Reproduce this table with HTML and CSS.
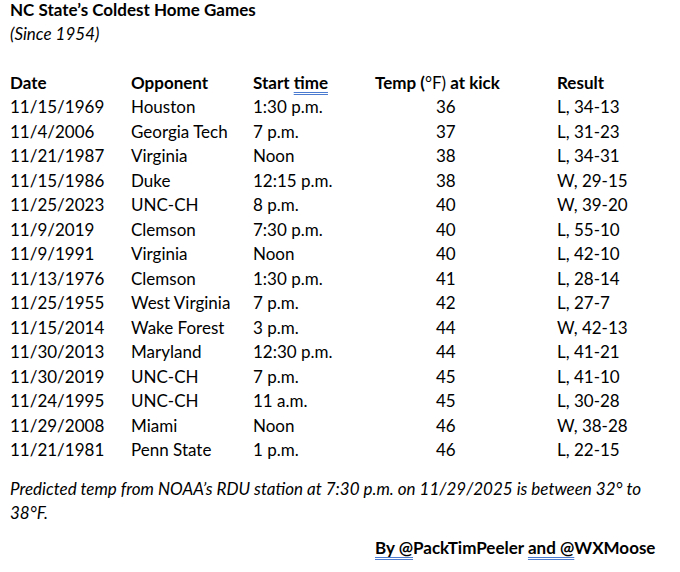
FILE: index.html
```html
<!DOCTYPE html>
<html>
<head>
<meta charset="utf-8">
<link rel="stylesheet" href="styles.css">
</head>
<body>
<div class="page">
  <div class="title">NC State’s Coldest Home Games</div>
  <div class="subtitle">(Since 1954)</div>
  <div class="blank"></div>
  <div class="grid">
    <div class="row head">
      <span>Date</span><span>Opponent</span><span>Start <span class="wavy">time</span></span><span class="temp-h">Temp (<span class="reg">°F)</span> at kick</span><span>Result</span>
    </div>
    <div class="row"><span>11/15/1969</span><span>Houston</span><span>1:30 p.m.</span><span class="temp">36</span><span>L, 34-13</span></div>
    <div class="row"><span>11/4/2006</span><span>Georgia Tech</span><span>7 p.m.</span><span class="temp">37</span><span>L, 31-23</span></div>
    <div class="row"><span>11/21/1987</span><span>Virginia</span><span>Noon</span><span class="temp">38</span><span>L, 34-31</span></div>
    <div class="row"><span>11/15/1986</span><span>Duke</span><span>12:15 p.m.</span><span class="temp">38</span><span>W, 29-15</span></div>
    <div class="row"><span>11/25/2023</span><span>UNC-CH</span><span>8 p.m.</span><span class="temp">40</span><span>W, 39-20</span></div>
    <div class="row"><span>11/9/2019</span><span>Clemson</span><span>7:30 p.m.</span><span class="temp">40</span><span>L, 55-10</span></div>
    <div class="row"><span>11/9/1991</span><span>Virginia</span><span>Noon</span><span class="temp">40</span><span>L, 42-10</span></div>
    <div class="row"><span>11/13/1976</span><span>Clemson</span><span>1:30 p.m.</span><span class="temp">41</span><span>L, 28-14</span></div>
    <div class="row"><span>11/25/1955</span><span>West Virginia</span><span>7 p.m.</span><span class="temp">42</span><span>L, 27-7</span></div>
    <div class="row"><span>11/15/2014</span><span>Wake Forest</span><span>3 p.m.</span><span class="temp">44</span><span>W, 42-13</span></div>
    <div class="row"><span>11/30/2013</span><span>Maryland</span><span>12:30 p.m.</span><span class="temp">44</span><span>L, 41-21</span></div>
    <div class="row"><span>11/30/2019</span><span>UNC-CH</span><span>7 p.m.</span><span class="temp">45</span><span>L, 41-10</span></div>
    <div class="row"><span>11/24/1995</span><span>UNC-CH</span><span>11 a.m.</span><span class="temp">45</span><span>L, 30-28</span></div>
    <div class="row"><span>11/29/2008</span><span>Miami</span><span>Noon</span><span class="temp">46</span><span>W, 38-28</span></div>
    <div class="row"><span>11/21/1981</span><span>Penn State</span><span>1 p.m.</span><span class="temp">46</span><span>L, 22-15</span></div>
  </div>
  <p class="note">Predicted temp from NOAA’s RDU station at 7:30 p.m. on 11/29/2025 is between 32° to 38°F.</p>
  <p class="byline"><span class="wavy">By @</span>PackTimPeeler <span class="wavy">and @</span>WXMoose</p>
</div>
</body>
</html>
```
FILE: styles.css
```css
html, body {
  margin: 0;
  padding: 0;
  background: #ffffff;
}

.page {
  font-family: Lato, "Open Sans", sans-serif;
  font-size: 17px;
  line-height: 24.5px;
  color: #000000;
  padding: 0 0 0 10px;
  width: 662px;
}

.title {
  font-weight: bold;
  line-height: 19px;
}

.subtitle {
  font-style: italic;
  margin-top: 2.5px;
}

.blank {
  height: 24.5px;
}

.row {
  display: grid;
  grid-template-columns: 121px 122px 122px 182px 1fr;
}

.head {
  font-weight: bold;
}

.reg {
  font-weight: normal;
}

.temp {
  padding-left: 61px;
}

.wavy {
  text-decoration: underline double #4a7bd0;
  text-decoration-thickness: 1px;
  text-underline-offset: 3px;
}

.note {
  margin: 14px 0 0 0;
  font-style: italic;
}

.byline {
  margin: 10px 0 0 365px;
  font-weight: bold;
}
```
